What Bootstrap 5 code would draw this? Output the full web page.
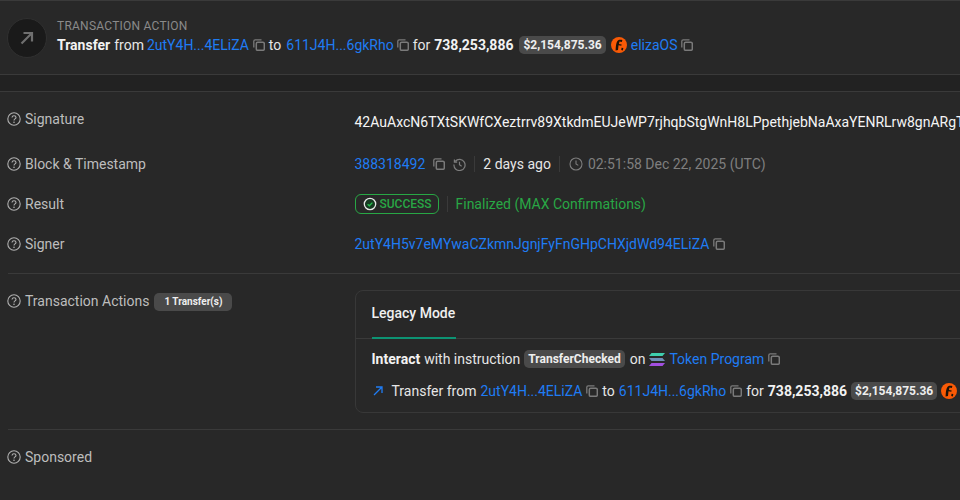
<!DOCTYPE html>
<html lang="en">
<head>
<meta charset="utf-8">
<title>Transaction</title>
<link href="https://cdn.jsdelivr.net/npm/bootstrap@5.3.0/dist/css/bootstrap.min.css" rel="stylesheet">
<style>
html,body{height:500px;overflow:hidden}
body{background:#282828;color:#e6e6e6;font-family:Roboto,"Liberation Sans",sans-serif;font-size:14px;line-height:20px}
svg{flex:none;display:block}
a{color:#1f7cf4;text-decoration:none}
b{font-weight:700;color:#f2f2f2}
.tophead{height:75px;border-top:1px solid #3a3a3a;border-bottom:1px solid #3a3a3a;padding:0 7px 2px;gap:10px}
.roundico{width:40px;height:40px;border-radius:50%;background:#1a1a1a;border:1px solid #303030;margin-top:2px}
.overline{font-size:12px;line-height:14px;color:#8a8a8a;margin-bottom:2px;letter-spacing:.02em}
.strip{height:17px;background:#222;border-bottom:1px solid #3a3a3a}
.flowline{gap:4px;white-space:nowrap}
.nudge-l{margin-left:-1px}
.nudge-r{margin-left:1px}
.nudge-r2{margin-left:2px}
.muted{color:#7f7f7f}
.pill{background:#4a4a4a;color:#eee;font-size:12px;font-weight:700;border-radius:5px;padding:0 4px;line-height:18px}
.info-row{padding:0 8px;height:40px;white-space:nowrap}
.info-first{height:44px;margin-top:8px}
.info-first .lbl{padding-top:9px}
.sigval{padding-top:12px;color:#f5f5f5}
.lbl{width:346.5px;color:#bdbdbd;gap:4px;flex:none}
.lbl>svg:first-child{margin-left:-1px}
.vsep{width:1px;height:16px;background:#3a3a3a}
.gap-clock{margin-left:9px}
.gap-time{margin-left:5px}
.okbox{border:1px solid #28a745;border-radius:6px;color:#28a745;font-size:12px;font-weight:500;height:20px;width:84px;gap:3px;padding-left:7px}
.okword{color:#28a745}
.rule{border-top:1px solid #3a3a3a;margin-left:8px}
.rule-a{margin-top:9px}
.act-row{height:auto;margin-top:16px;margin-bottom:16px}
.act-row .lbl{padding-top:1px;align-items:center}
.actbox{border:1px solid #383838;border-radius:8px;width:700px;height:123px}
.tabbar{height:48px;border-bottom:1px solid #3a3a3a;padding-left:16px}
.tabitem{height:48px;display:flex;align-items:center;font-weight:500;color:#f0f0f0;border-bottom:2px solid #0d9373;width:84px;padding-bottom:2px}
.actbody{padding:10px 16px 0}
.actline{margin-bottom:12px}
.pillsm{font-size:10px;padding:0 10px;margin-left:1px;margin-top:1px}
.sponsor-row{margin-top:7px}
</style>
</head>
<body>
<svg width="0" height="0" class="position-absolute">
<defs>
<symbol id="cp" viewBox="0 0 12 12"><path d="M.8 8.500V2.200C.8 1.400 1.400.8 2.200.8H8.500" fill="none" stroke="#7a7a7a" stroke-width="1.300"/><rect x="3.300" y="3.300" width="8" height="8" rx="1.400" fill="none" stroke="#7a7a7a" stroke-width="1.500"/></symbol>
<symbol id="hlp" viewBox="0 0 14 14"><circle cx="7" cy="7" r="6.200" fill="none" stroke="#b0b0b0" stroke-width="1.100"/><path d="M5 5.500C5.100 4.300 5.900 3.700 7 3.700c1.200 0 2 .8 2 1.700 0 1.500-2 1.500-2 3" fill="none" stroke="#b0b0b0" stroke-width="1.100"/><circle cx="7" cy="10.200" r=".8" fill="#b0b0b0"/></symbol>
<symbol id="tok" viewBox="0 0 16 16"><circle cx="8" cy="8" r="8" fill="#f95a06"/><path d="M4.600 13.500C4.800 9.500 5 6 6.400 4c1.100-1.400 3-1.500 5-.9l-.6 2-2.300-.5-.6 2.300 2.800.5-.4 1.300-2.800-.4-.5 4.800zM10.600 10.800l1.700.3-.4 2.300-1.700-.3z" fill="#1a1208"/></symbol>
</defs>
</svg>

<header class="tophead d-flex align-items-center">
<div class="roundico d-flex align-items-center justify-content-center">
<svg width="16" height="16" viewBox="0 0 16 16"><path d="M2.500 13.500 13 3M4.500 3H13v8.500" fill="none" stroke="#6f6f6f" stroke-width="2.200"/></svg>
</div>
<div>
<div class="overline">TRANSACTION ACTION</div>
<div class="d-flex align-items-center flowline">
<b>Transfer</b><span>from</span><a class="nudge-l" href="#">2utY4H...4ELiZA</a>
<svg width="12" height="12"><use href="#cp"/></svg>
<span>to</span><a class="nudge-r" href="#">611J4H...6gkRho</a>
<svg class="nudge-l" width="12" height="12"><use href="#cp"/></svg>
<span>for</span><b>738,253,886</b>
<span class="pill nudge-r2">$2,154,875.36</span>
<svg class="nudge-r" width="16" height="16"><use href="#tok"/></svg>
<a href="#">elizaOS</a>
<svg width="12" height="12"><use href="#cp"/></svg>
</div>
</div>
</header>
<div class="strip"></div>

<main>
<div class="info-row info-first d-flex align-items-start">
<div class="lbl d-flex align-items-center"><svg width="14" height="14"><use href="#hlp"/></svg><span>Signature</span></div>
<div class="sigval">42AuAxcN6TXtSKWfCXeztrrv89XtkdmEUJeWP7rjhqbStgWnH8LPpethjebNaAxaYENRLrw8gnARgT</div>
</div>
<div class="info-row d-flex align-items-center">
<div class="lbl d-flex align-items-center"><svg width="14" height="14"><use href="#hlp"/></svg><span>Block &amp; Timestamp</span></div>
<div class="d-flex align-items-center">
<a href="#">388318492</a>
<svg class="ms-2" width="12" height="12"><use href="#cp"/></svg>
<svg class="ms-2" width="13" height="13" viewBox="0 0 14 14"><path d="M2.500 3.500A6 6 0 1 1 1 7M1.500 1.500v3h3M7 4v3.300L9.300 9" fill="none" stroke="#7d7d7d" stroke-width="1.300"/></svg>
<span class="vsep ms-2"></span>
<span class="ms-2">2 days ago</span>
<span class="vsep ms-2"></span>
<svg class="gap-clock" width="14" height="14" viewBox="0 0 14 14"><circle cx="7" cy="7" r="6" fill="none" stroke="#7d7d7d" stroke-width="1.100"/><path d="M7 3.500V7l2.300 1.400" fill="none" stroke="#7d7d7d" stroke-width="1.100"/></svg>
<span class="gap-time muted">02:51:58 Dec 22, 2025 (UTC)</span>
</div>
</div>
<div class="info-row d-flex align-items-center">
<div class="lbl d-flex align-items-center"><svg width="14" height="14"><use href="#hlp"/></svg><span>Result</span></div>
<div class="d-flex align-items-center">
<span class="okbox d-flex align-items-center"><svg width="14" height="14" viewBox="0 0 14 14"><circle cx="7" cy="7" r="5.700" fill="#173a22" stroke="#e8e8e8" stroke-width="1.300"/><path d="M4.600 7.200 6.300 8.800 9.400 5.600" fill="none" stroke="#28c050" stroke-width="1.300"/></svg>SUCCESS</span>
<span class="vsep ms-2"></span>
<span class="ms-2 okword">Finalized (MAX Confirmations)</span>
</div>
</div>
<div class="info-row d-flex align-items-center">
<div class="lbl d-flex align-items-center"><svg width="14" height="14"><use href="#hlp"/></svg><span>Signer</span></div>
<div class="d-flex align-items-center">
<a href="#">2utY4H5v7eMYwaCZkmnJgnjFyFnGHpCHXjdWd94ELiZA</a>
<svg class="ms-1" width="12" height="12"><use href="#cp"/></svg>
</div>
</div>
<div class="rule rule-a"></div>
<div class="info-row act-row d-flex align-items-start">
<div class="lbl d-flex align-items-center"><svg width="14" height="14"><use href="#hlp"/></svg><span>Transaction Actions</span><span class="pill pillsm">1 Transfer(s)</span></div>
<div class="actbox">
<div class="tabbar"><div class="tabitem">Legacy Mode</div></div>
<div class="actbody">
<div class="d-flex align-items-center flowline actline">
<b>Interact</b><span>with instruction</span>
<span class="pill">TransferChecked</span>
<span class="nudge-r">on</span>
<svg width="16" height="13" viewBox="0 0 16 13"><path d="M2.500 0H16l-2.500 3H0z" fill="#3fcfae"/><path d="M0 5h13.500L16 8H2.500z" fill="#6f8fb8"/><path d="M2.500 10H16l-2.500 3H0z" fill="#a24fe0"/></svg>
<a href="#">Token Program</a>
<svg width="12" height="12"><use href="#cp"/></svg>
</div>
<div class="d-flex align-items-center flowline">
<svg class="me-1" width="12" height="12" viewBox="0 0 12 12"><path d="M2 10 10 2M4 2h6v6" fill="none" stroke="#1f7cf4" stroke-width="1.300"/></svg>
<span>Transfer from</span><a href="#">2utY4H...4ELiZA</a>
<svg width="12" height="12"><use href="#cp"/></svg>
<span>to</span><a href="#">611J4H...6gkRho</a>
<svg width="12" height="12"><use href="#cp"/></svg>
<span>for</span><b>738,253,886</b>
<span class="pill">$2,154,875.36</span>
<svg width="16" height="16"><use href="#tok"/></svg>
</div>
</div>
</div>
</div>
<div class="rule"></div>
<div class="info-row sponsor-row d-flex align-items-center">
<div class="lbl d-flex align-items-center"><svg width="14" height="14"><use href="#hlp"/></svg><span>Sponsored</span></div>
</div>
</main>
</body>
</html>
